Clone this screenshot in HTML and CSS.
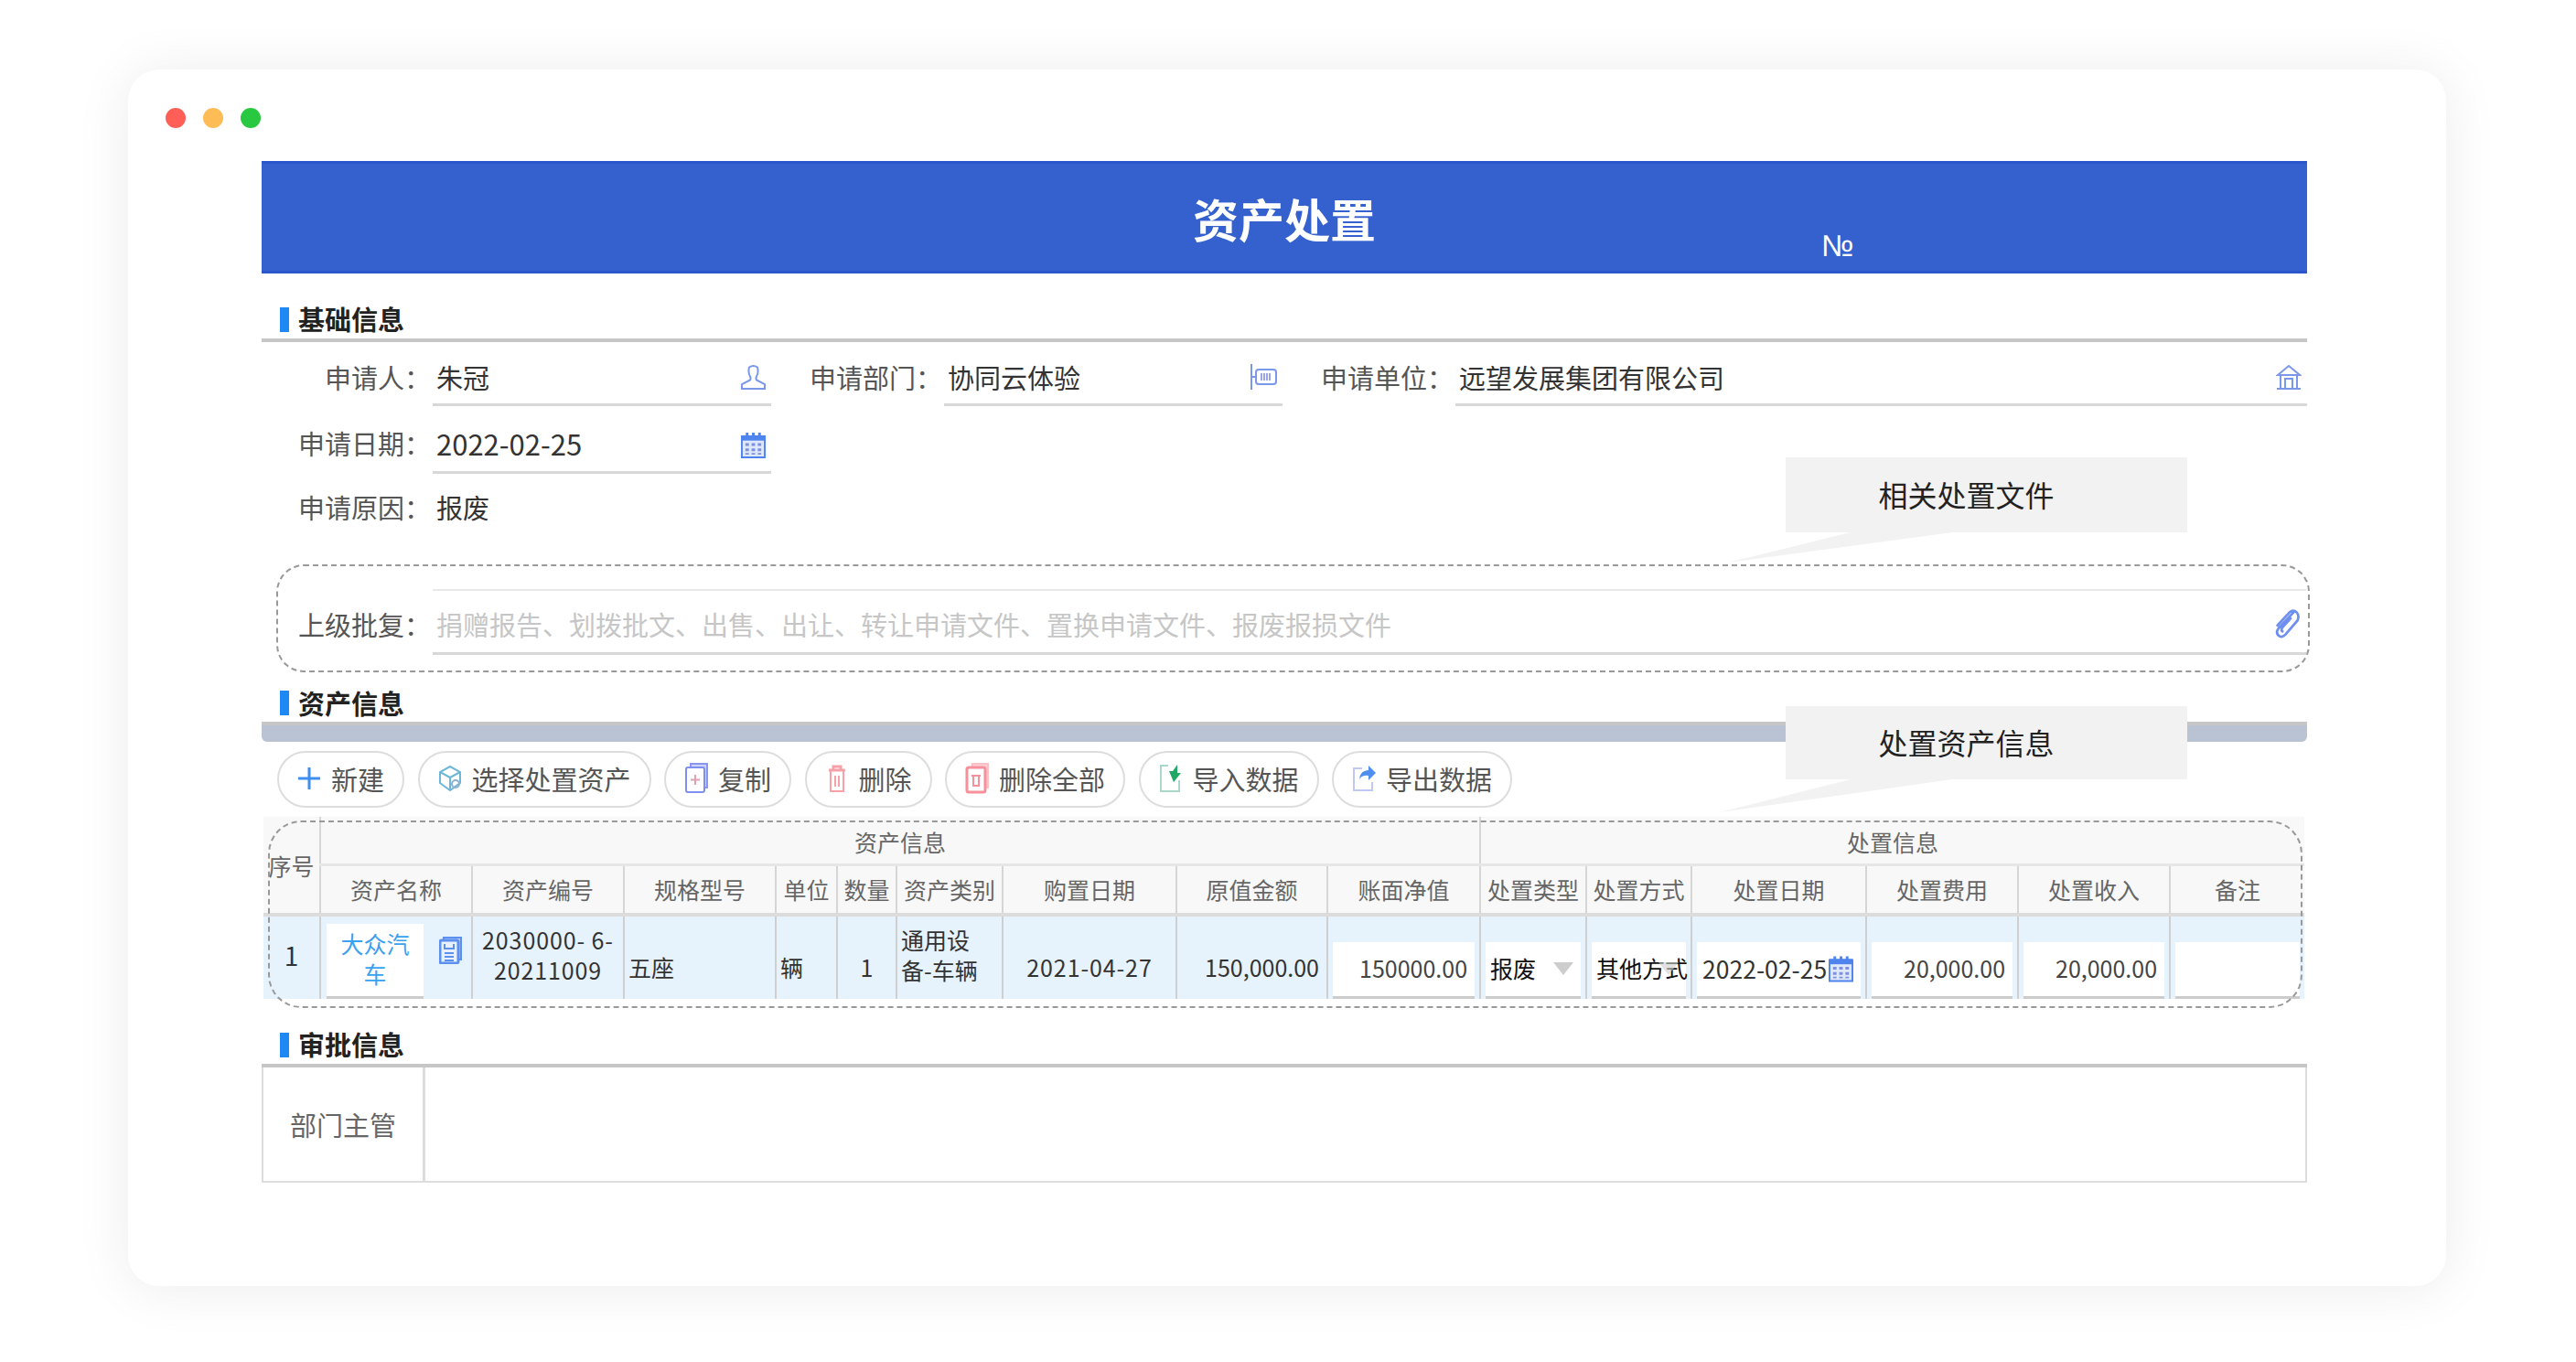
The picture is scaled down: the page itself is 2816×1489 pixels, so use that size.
FILE: index.html
```html
<!DOCTYPE html>
<html lang="zh-CN">
<head>
    <meta charset="UTF-8">
    <title>资产处置</title>
    <link rel="stylesheet" href="styles.css">
</head>
<body>
    <svg class="sprites" width="0" height="0">
        <symbol id="calendar" viewBox="0 0 28 30">
            <path d="M1 5h26v24H1z" fill="#dfe8fb" stroke="#4f84ee" stroke-width="2"/>
            <path d="M1 4h26v6H1z" fill="#4f84ee"/>
            <path d="M7 1v6M14 1v6M21 1v6" stroke="#4f84ee" stroke-width="3"/>
            <path d="M5 13h4v3H5zM12 13h4v3h-4zM19 13h4v3h-4zM5 19h4v3H5zM12 19h4v3h-4zM19 19h4v3h-4zM5 24h4v2H5zM12 24h4v2h-4zM19 24h4v2h-4z" fill="#7f8fe0"/>
        </symbol>
    </svg>

    <div class="card">
        <div class="dots">
            <span class="dot red"></span>
            <span class="dot yellow"></span>
            <span class="dot green"></span>
        </div>

        <div class="sheet">
            <div class="banner">
                <h1>资产处置</h1>
                <span class="serial">№</span>
            </div>

            <div class="section-head first"><span class="mark"></span>基础信息</div>

            <div class="form-row top">
                <div class="label">申请人：</div>
                <div class="value narrow">
                    <span>朱冠</span>
                    <svg class="field-icon" width="27" height="28" viewBox="0 0 27 28" fill="none" stroke="#7b97ea" stroke-width="2">
                        <path d="M9 3.500q4.500-3 9 0q1.500 6-1 10q-1 2 0 4l9 4.500v5H1v-5l9-4.500q1-2 0-4q-2.500-4-1-10z"/>
                    </svg>
                </div>
                <div class="label">申请部门：</div>
                <div class="value narrow">
                    <span>协同云体验</span>
                    <svg class="field-icon" width="30" height="28" viewBox="0 0 30 28" fill="none" stroke="#7b97ea" stroke-width="2">
                        <path d="M2 0v28M2 14h6"/>
                        <rect x="7" y="6" width="22" height="16" rx="3"/>
                        <path d="M13 10v8M16 10v8M19 10v8M22 10v8" stroke="#9aa4e6"/>
                    </svg>
                </div>
                <div class="label">申请单位：</div>
                <div class="value wide">
                    <span>远望发展集团有限公司</span>
                    <svg class="field-icon" width="28" height="29" viewBox="0 0 28 29" fill="none" stroke="#7b97ea" stroke-width="2">
                        <path d="M2 12 14 2l12 10zM5 12v14M23 12v14M1 27h26M10 26V16h8v10"/>
                    </svg>
                </div>
            </div>

            <div class="form-row">
                <div class="label">申请日期：</div>
                <div class="value narrow">
                    <span class="digits">2022-02-25</span>
                    <svg class="field-icon" width="27" height="29"><use href="#calendar"/></svg>
                </div>
            </div>

            <div class="form-row plain">
                <div class="label">申请原因：</div>
                <div class="plain-value">报废</div>
            </div>

            <div class="reply-box">
                <div class="label">上级批复：</div>
                <div class="reply-value">
                    <span>捐赠报告、划拨批文、出售、出让、转让申请文件、置换申请文件、报废报损文件</span>
                    <svg width="30" height="33" viewBox="0 0 27 30" fill="none" stroke="#6f8ff0" stroke-width="2.500" stroke-linecap="round">
                        <path d="M21 4 6 20q-3 4 0 7t7-1L25 12q2-5-1-8t-7 0L5 17M18 10 10 19q-2 3 0 4"/>
                    </svg>
                </div>
            </div>

            <div class="section-head second"><span class="mark"></span>资产信息</div>
            <div class="band"></div>

            <div class="toolbar">
                <button class="pill">
                    <svg width="26" height="26" viewBox="0 0 26 26" stroke="#3f8ff0" stroke-width="3"><path d="M13 1v24M1 13h24"/></svg>
                    <span>新建</span>
                </button>
                <button class="pill">
                    <svg width="26" height="30" viewBox="0 0 26 30" fill="none" stroke="#6fb7d8" stroke-width="2">
                        <path d="M13 2 24 8v12l-11 8L2 20V8zM2 8l11 6 11-6M13 14v14"/>
                        <circle cx="19" cy="21" r="4" stroke="#8fb0d0"/>
                    </svg>
                    <span>选择处置资产</span>
                </button>
                <button class="pill">
                    <svg width="26" height="34" viewBox="0 0 26 34" fill="none" stroke="#8a96ee" stroke-width="2">
                        <path d="M7 4V1h18v26h-3" fill="#cdd3f8"/>
                        <rect x="2" y="5" width="20" height="27" rx="2" fill="#fff" stroke="#7f8ff0"/>
                        <path d="M12 13v11M7 18.500h10" stroke="#e0a0b0"/>
                    </svg>
                    <span>复制</span>
                </button>
                <button class="pill">
                    <svg width="26" height="32" viewBox="0 0 26 32" fill="none" stroke="#f6a0a8" stroke-width="2">
                        <path d="M4 7h18M9 7V3h8v4" stroke-width="3"/>
                        <path d="M6 8v22h14V8M11 13v12M15 13v12"/>
                    </svg>
                    <span>删除</span>
                </button>
                <button class="pill">
                    <svg width="26" height="34" viewBox="0 0 26 34" fill="none" stroke="#f6909a" stroke-width="2">
                        <path d="M8 4V1h17v26h-3" fill="#fcd0d4" stroke="#fcc0c6"/>
                        <rect x="2" y="5" width="20" height="27" rx="2" fill="#fff" stroke-width="3"/>
                        <path d="M7 14h10M9 14v11h6V14"/>
                    </svg>
                    <span>删除全部</span>
                </button>
                <button class="pill">
                    <svg width="26" height="32" viewBox="0 0 26 32" fill="none" stroke="#a9d8c8" stroke-width="2">
                        <path d="M10 2H2v28h20V18"/>
                        <path d="M20 1 15 8h-4l5 12 8-10h-4z" fill="#21a866" stroke="none"/>
                    </svg>
                    <span>导入数据</span>
                </button>
                <button class="pill">
                    <svg width="26" height="30" viewBox="0 0 26 30" fill="none" stroke="#c0c8f6" stroke-width="2">
                        <path d="M11 4H2v24h20v-9"/>
                        <path d="M18 1v5q-9 0-10 10 3-5 10-4v5l8-8z" fill="#4f8ff0" stroke="none"/>
                    </svg>
                    <span>导出数据</span>
                </button>
            </div>

            <div class="grid-wrap">
                <table class="asset-table">
                    <colgroup>
                        <col class="c62"><col class="c166"><col class="c166"><col class="c166">
                        <col class="c67"><col class="c65"><col class="c116"><col class="c190">
                        <col class="c165"><col class="c167"><col class="c116"><col class="c115">
                        <col class="c191"><col class="c166"><col class="c166"><col class="c147">
                    </colgroup>
                    <tr class="group-row">
                        <th rowspan="2" class="seq-head">序号</th>
                        <th colspan="9">资产信息</th>
                        <th colspan="6">处置信息</th>
                    </tr>
                    <tr class="head-row">
                        <th>资产名称</th><th>资产编号</th><th>规格型号</th><th>单位</th><th>数量</th>
                        <th>资产类别</th><th>购置日期</th><th>原值金额</th><th>账面净值</th>
                        <th>处置类型</th><th>处置方式</th><th>处置日期</th><th>处置费用</th><th>处置收入</th><th>备注</th>
                    </tr>
                    <tr class="data-row">
                        <td class="seq">1</td>
                        <td class="name-cell">
                            <div class="name-wrap">
                                <div class="name-input">大众汽<br>车</div>
                                <svg width="25" height="30" viewBox="0 0 25 30" fill="none" stroke="#5b90ee" stroke-width="2">
                                    <path d="M5 3V1h19v24h-3" fill="#b9c8f6"/>
                                    <rect x="1" y="4" width="20" height="25" rx="2" fill="#e8f0fd" stroke-width="3"/>
                                    <path d="M6 8v5h10V8M6 18h10M6 22h10M6 26h10"/>
                                </svg>
                            </div>
                        </td>
                        <td class="center two-line code">2030000- 6-<br>20211009</td>
                        <td class="low">五座</td>
                        <td class="low">辆</td>
                        <td class="low center">1</td>
                        <td class="two-line">通用设<br>备-车辆</td>
                        <td class="low center code">2021-04-27</td>
                        <td class="low right">150,000.00</td>
                        <td class="in-cell"><div class="input num">150000.00</div></td>
                        <td class="in-cell"><div class="input dark">报废<i class="caret"></i></div></td>
                        <td class="in-cell"><div class="input dark">其他方式<i class="caret ghost"></i></div></td>
                        <td class="in-cell"><div class="input date">2022-02-25<svg width="27" height="30"><use href="#calendar"/></svg></div></td>
                        <td class="in-cell"><div class="input num">20,000.00</div></td>
                        <td class="in-cell"><div class="input num">20,000.00</div></td>
                        <td class="in-cell"><div class="input"></div></td>
                    </tr>
                </table>
                <div class="dash-frame"></div>
            </div>

            <div class="section-head third"><span class="mark"></span>审批信息</div>
            <div class="approval">
                <div class="approval-label">部门主管</div>
                <div class="approval-body"></div>
            </div>
        </div>

        <div class="callout file-note">相关处置文件</div>
        <div class="callout asset-note">处置资产信息</div>
    </div>
</body>
</html>
```

FILE: styles.css
```css
* {
    box-sizing: border-box;
}
body {
    margin: 0;
    padding-bottom: 83px;
    background: #fff;
    font-family: "Noto Sans CJK SC", "Noto Sans", sans-serif;
    font-size: 29px;
    color: #333;
}
.sprites {
    position: absolute;
}
.card {
    position: relative;
    width: 2534px;
    height: 1330px;
    margin: 76px 0 0 140px;
    padding: 42px 0 0 41px;
    background: #fff;
    border-radius: 34px;
    box-shadow: 0 2px 60px rgba(0, 0, 0, 0.08);
}
.dots {
    display: flex;
    gap: 19px;
}
.dot {
    width: 22px;
    height: 22px;
    border-radius: 50%;
}
.red { background: #ff5f57; }
.yellow { background: #febc57; }
.green { background: #28c840; }

.sheet {
    width: 2236px;
    margin: 36px 0 0 105px;
}
.banner {
    position: relative;
    display: flex;
    justify-content: center;
    align-items: center;
    height: 123px;
    background: #3561cf;
    border-top: 3px solid #2a58cc;
    border-bottom: 3px solid #2a58cc;
    color: #fff;
}
.banner h1 {
    margin: 0;
    font-size: 50px;
    font-weight: 700;
    line-height: 1.2;
}
.serial {
    position: absolute;
    left: 1705px;
    top: 70px;
    font-family: "Liberation Sans", sans-serif;
    font-size: 33px;
    line-height: 40px;
}

.section-head {
    display: flex;
    align-items: center;
    height: 45px;
    padding-left: 20px;
    border-bottom: 4px solid #c6c6c6;
    font-weight: 700;
    line-height: 41px;
    color: #222;
    letter-spacing: 0;
}
.section-head.first { margin-top: 30px; }
.section-head.second { margin-top: 13px; }
.section-head.third { margin-top: 30px; }
.section-head.first,
.section-head.third {
    padding-bottom: 3px;
}
.section-head.first .mark,
.section-head.third .mark {
    margin-top: 3px;
}
.mark {
    width: 10px;
    height: 27px;
    margin-right: 10px;
    background: #1e88f5;
}

.form-row {
    display: flex;
    margin-top: 24px;
    line-height: 33px;
}
.form-row.top {
    margin-top: 20px;
    line-height: 36px;
}
.form-row.plain {
    height: 40px;
    margin-top: 20px;
}
.label {
    flex: none;
    width: 189px;
    padding-right: 2px;
    text-align: right;
    color: #555;
}
.form-row .label:first-child {
    width: 187px;
}
.value {
    display: flex;
    justify-content: space-between;
    align-items: flex-start;
    height: 50px;
    padding: 0 6px 0 4px;
    border-bottom: 3px solid #d8d8d8;
    color: #333;
}
.value.narrow { width: 370px; }
.value.wide { flex: 1; }
.digits { font-size: 31px; }
.field-icon {
    flex: none;
    margin-top: 4px;
}
.plain-value {
    padding-left: 4px;
}

.reply-box {
    display: flex;
    align-items: center;
    height: 118px;
    margin: 39px -3px 0 16px;
    padding: 25px 2px 17px 0;
    border: 2px dashed #999;
    border-radius: 30px;
}
.reply-box .label {
    width: 169px;
    padding-top: 3px;
}
.reply-value {
    display: flex;
    flex: 1;
    justify-content: space-between;
    align-items: center;
    height: 72px;
    padding: 4px 7px 0 4px;
    border-top: 2px solid #e8e8e8;
    border-bottom: 3px solid #d8d8d8;
    color: #c6c6c6;
}

.band {
    height: 18px;
    background: #b9c3d3;
    border-radius: 0 0 6px 6px;
}
.toolbar {
    display: flex;
    gap: 14.500px;
    margin: 10px 0 0 17px;
}
.pill {
    display: flex;
    align-items: center;
    gap: 11px;
    height: 62px;
    padding: 0 20px 2px;
    background: #fff;
    border: 2px solid #ddd;
    border-radius: 31px;
    font: inherit;
    color: #555;
}

.grid-wrap {
    position: relative;
    margin: 10px 0 0 2px;
}
.asset-table {
    width: 2231px;
    table-layout: fixed;
    border-collapse: collapse;
    font-size: 25px;
}
.c62 { width: 62px; }
.c65 { width: 65px; }
.c67 { width: 67px; }
.c115 { width: 115px; }
.c116 { width: 116px; }
.c147 { width: 147px; }
.c165 { width: 165px; }
.c166 { width: 166px; }
.c167 { width: 167px; }
.c190 { width: 190px; }
.c191 { width: 191px; }
.asset-table th {
    padding: 0;
    background: #f8f8f8;
    border: 2px solid #d6d6d6;
    border-top: 0;
    font-weight: 400;
    color: #666;
    white-space: nowrap;
}
.asset-table tr th:first-child,
.asset-table td:first-child { border-left: 0; }
.asset-table tr th:last-child,
.asset-table td:last-child { border-right: 0; }
.group-row { height: 52px; }
.group-row th {
    padding-top: 3px;
    border-bottom: 3px solid #e6e6e6;
}
.head-row { height: 55px; }
.head-row th { border-bottom: 4px solid #dcdcdc; }
.seq-head.seq-head {
    padding-top: 0;
    border-bottom: 4px solid #dcdcdc;
}
.data-row { height: 91px; }
.asset-table td {
    padding: 0 4px;
    background: #e6f2fc;
    border: 2px solid #cfcfcf;
    border-bottom: 0;
    line-height: 33px;
    color: #333;
}
.asset-table td.seq {
    padding-bottom: 6px;
    font-size: 28px;
    text-align: center;
}
.asset-table td.center { text-align: center; }
.asset-table td.right { text-align: right; padding-right: 8px; }
.asset-table td.low { padding-top: 20px; }
.asset-table td.two-line { padding-bottom: 6px; }
.asset-table td.code { letter-spacing: 0.900px; }
.asset-table td.name-cell { padding: 8px 0 0 6px; }
.name-wrap {
    display: flex;
    align-items: flex-start;
    gap: 17px;
}
.name-input {
    width: 106px;
    height: 82px;
    padding-top: 5px;
    background: #fff;
    border-bottom: 3px solid #ccc;
    text-align: center;
    color: #3aa0f0;
}
.name-wrap svg {
    flex: none;
    margin-top: 14px;
}
.asset-table td.in-cell {
    padding: 28px 5px 0;
    vertical-align: bottom;
}
.input {
    position: relative;
    display: flex;
    align-items: center;
    height: 62px;
    padding: 0 8px 2px 6px;
    background: #fff;
    border-bottom: 3px solid #ccc;
    white-space: nowrap;
}
.input.num {
    justify-content: flex-end;
    color: #444;
}
.input.dark { color: #111; padding: 0 0 2px 5px; }
.input.date {
    gap: 2px;
    padding: 0 0 2px 6px;
    font-size: 26.500px;
}
.caret {
    position: absolute;
    right: 8px;
    top: 22px;
    border-left: 11px solid transparent;
    border-right: 11px solid transparent;
    border-top: 14px solid #cdcdcd;
}
.caret.ghost { opacity: 0.6; }
.dash-frame {
    position: absolute;
    left: 5px;
    top: 4px;
    width: 2224px;
    height: 205px;
    border: 2px dashed #999;
    border-radius: 36px;
    pointer-events: none;
}

.approval {
    display: flex;
    height: 126px;
    background: #fff;
    border: 2px solid #ddd;
    border-top: 0;
}
.approval-label {
    display: flex;
    justify-content: center;
    align-items: center;
    width: 177px;
    border-right: 3px solid #ddd;
    color: #666;
}
.approval-body {
    flex: 1;
}

.callout {
    position: absolute;
    left: 1812px;
    display: flex;
    justify-content: center;
    align-items: center;
    width: 439px;
    padding: 0 44px 3px 0;
    background: #f2f2f2;
    font-size: 32px;
    color: #222;
}
.callout::after {
    content: "";
    position: absolute;
    left: -72px;
    top: 100%;
    width: 254px;
    height: 36px;
    background: #f2f2f2;
    clip-path: polygon(143px 0, 254px 0, 0 36px);
}
.file-note {
    top: 424px;
    height: 82px;
}
.file-note::after {
    left: -63px;
    width: 245px;
    height: 33px;
    clip-path: polygon(134px 0, 245px 0, 0 33px);
}
.asset-note {
    top: 696px;
    height: 80px;
}
```
